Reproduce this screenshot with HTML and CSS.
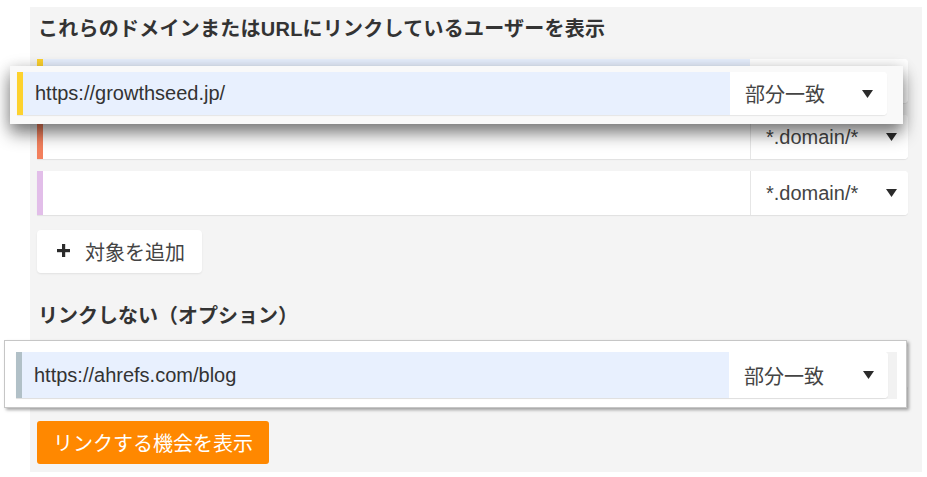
FILE: index.html
```html
<!DOCTYPE html>
<html lang="ja">
<head>
<meta charset="utf-8">
<title>リンク機会</title>
<link rel="stylesheet" href="styles.css">
</head>
<body>
<div class="page">
  <div class="panel">
    <h2 class="heading heading--main">これらのドメインまたはURLにリンクしているユーザーを表示</h2>
    <div class="rows">
      <div class="row row--yellow row--filled">
        <div class="row__input"></div>
        <div class="row__select"></div>
      </div>
      <div class="row row--coral">
        <div class="row__input"></div>
        <div class="row__select"><span>*.domain/*</span><svg class="caret" width="11" height="8" viewBox="0 0 11 8"><polygon points="0,0 11,0 5.5,8"/></svg></div>
      </div>
      <div class="row row--lilac">
        <div class="row__input"></div>
        <div class="row__select"><span>*.domain/*</span><svg class="caret" width="11" height="8" viewBox="0 0 11 8"><polygon points="0,0 11,0 5.5,8"/></svg></div>
      </div>
    </div>
    <button class="add-btn" type="button"><svg class="plus" width="13" height="13" viewBox="0 0 13 13"><rect x="5" y="0" width="3.2" height="13"/><rect x="0" y="5" width="13" height="3.2"/></svg><span>対象を追加</span></button>
    <h2 class="heading heading--sub">リンクしない（オプション）</h2>
    <div class="row row--slate row--filled row--exclude">
      <div class="row__input"></div>
      <div class="row__select"></div>
    </div>
    <button class="cta" type="button">リンクする機会を表示</button>
  </div>

  <div class="zoom zoom--one">
    <div class="row row--yellow row--filled">
      <div class="row__input">https://growthseed.jp/</div>
      <div class="row__select"><span>部分一致</span><svg class="caret" width="11" height="8" viewBox="0 0 11 8"><polygon points="0,0 11,0 5.5,8"/></svg></div>
    </div>
  </div>

  <div class="zoom zoom--two">
    <div class="zoom__well">
      <div class="row row--slate row--filled">
        <div class="row__input">https://ahrefs.com/blog</div>
        <div class="row__select"><span>部分一致</span><svg class="caret" width="11" height="8" viewBox="0 0 11 8"><polygon points="0,0 11,0 5.5,8"/></svg></div>
      </div>
    </div>
  </div>
</div>
</body>
</html>
```
FILE: styles.css
```css
*, *::before, *::after {
  box-sizing: border-box;
}

html, body {
  margin: 0;
  padding: 0;
  background: #ffffff;
}

body {
  font-family: "Liberation Sans", "Noto Sans CJK JP", sans-serif;
  color: #333333;
}

.page {
  position: relative;
  width: 927px;
  height: 477px;
  overflow: hidden;
}

.panel {
  margin: 7px 0 0 30px;
  width: 892px;
  padding: 9px 14px 8px 7px;
  background: #f4f4f4;
}

.heading {
  margin: 0 0 0 1px;
  font-size: 20px;
  line-height: 26px;
  font-weight: bold;
  color: #333333;
  white-space: nowrap;
}

.heading--main {
  letter-spacing: 0.25px;
}

.heading--sub {
  margin-top: 30px;
}

.rows {
  display: flex;
  flex-direction: column;
  gap: 12px;
  margin-top: 17px;
}

.row {
  display: flex;
  height: 44px;
  background: #ffffff;
  border-left: 6px solid #cccccc;
  border-radius: 0 4px 4px 0;
  box-shadow: 0 1px 1px rgba(0, 0, 0, 0.08);
}

.row--yellow { border-left-color: #fdd22e; }
.row--coral { border-left-color: #f3805d; }
.row--lilac { border-left-color: #e2bee9; }
.row--slate { border-left-color: #b1c0c7; }

.row__input {
  flex: 1;
  display: flex;
  align-items: center;
  padding-left: 12px;
  font-size: 20px;
  color: #333333;
  white-space: nowrap;
}

.row--filled .row__input {
  background: #e8f0fe;
}

.row__select {
  width: 158px;
  flex: none;
  display: flex;
  align-items: center;
  justify-content: space-between;
  padding: 0 11px 0 15px;
  border-left: 1px solid #e6e6e6;
  border-radius: 0 4px 4px 0;
  background: #ffffff;
  font-size: 20px;
  color: #444444;
  white-space: nowrap;
}

.row--filled .row__select {
  border-left: 0;
}

.caret {
  fill: #2b2b2b;
  flex: none;
}

.add-btn {
  margin-top: 15px;
  height: 43px;
  width: 165px;
  display: flex;
  align-items: center;
  gap: 15px;
  padding: 0 0 0 20px;
  border: 0;
  border-radius: 4px;
  background: #ffffff;
  box-shadow: 0 1px 2px rgba(0, 0, 0, 0.08);
  font-family: inherit;
  font-size: 20px;
  color: #444444;
}

.plus {
  fill: #2b2b2b;
  flex: none;
  margin-top: -2px;
}

.row--exclude {
  margin-top: 16px;
}

.cta {
  display: block;
  margin-top: 32px;
  height: 43px;
  padding: 0 16px;
  border: 0;
  border-radius: 3px;
  background: #ff8800;
  color: #ffffff;
  font-family: inherit;
  font-size: 20px;
}

.zoom {
  position: absolute;
}

.zoom--one {
  left: 10px;
  top: 66px;
  width: 893px;
  height: 58px;
  padding: 6px 0 0 7px;
  background: #f9f9f9;
  box-shadow: 0 10px 16px rgba(0, 0, 0, 0.45), 0 2px 14px rgba(0, 0, 0, 0.18);
}

.zoom--one .row {
  width: 870px;
  height: 43px;
}

.zoom--one .row__select {
  width: 157px;
  padding-right: 14px;
}

.zoom--two {
  left: 4px;
  top: 340px;
  width: 903px;
  height: 68px;
  padding: 11px 0 0 11px;
  background: #ffffff;
  border: 1px solid #c6c6c6;
  box-shadow: 2px 2px 3px rgba(0, 0, 0, 0.35);
}

.zoom__well {
  width: 881px;
  height: 47px;
  background: #f2f2f2;
}

.zoom--two .row {
  width: 872px;
  height: 46px;
}

.zoom--two .row__select {
  width: 159px;
  padding-right: 14px;
}
```
